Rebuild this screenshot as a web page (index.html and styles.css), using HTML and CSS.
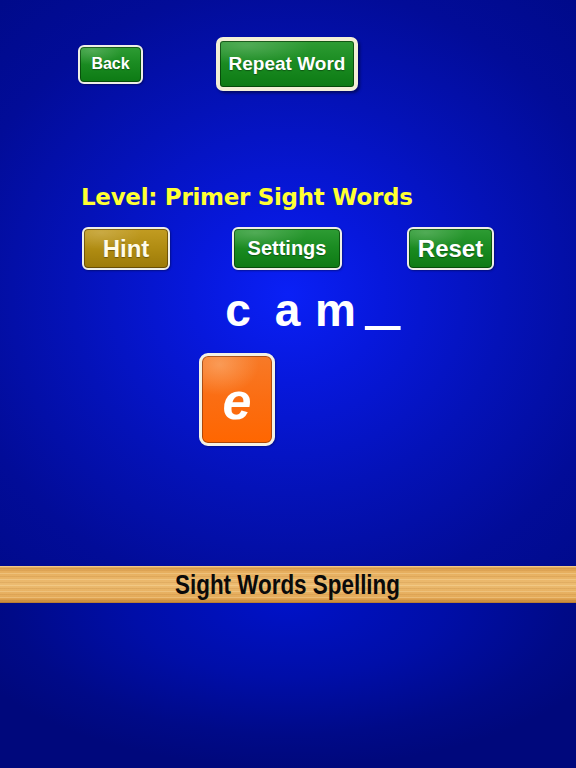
FILE: index.html
```html
<!DOCTYPE html>
<html lang="en">
<head>
    <meta charset="UTF-8">
    <meta name="viewport" content="width=device-width, initial-scale=1.0">
    <title>Sight Words Spelling</title>
    <link rel="stylesheet" href="styles.css">
</head>

<body>
    <div class="stage">
        <div class="top-row">
            <button class="btn btn-back">Back</button>
            <button class="btn btn-repeat">Repeat Word</button>
        </div>

        <h1 class="level">Level: Primer Sight Words</h1>

        <div class="controls">
            <button class="btn btn-gold btn-hint">Hint</button>
            <button class="btn btn-settings">Settings</button>
            <button class="btn btn-reset">Reset</button>
        </div>

        <div class="word">
            <span class="letter l1">c</span>
            <span class="letter l2">a</span>
            <span class="letter l3">m</span>
            <span class="letter l4"><span class="blank">_</span></span>
        </div>

        <div class="tiles">
            <div class="tile"><span>e</span></div>
        </div>
    </div>

    <div class="banner"><span class="banner-title">Sight Words Spelling</span></div>

    <div class="footer"></div>
</body>
</html>
```

FILE: styles.css
```css
body {
    margin: 0;
    width: 576px;
    height: 768px;
    overflow: hidden;
    background: #000a88;
    font-family: 'Liberation Sans', Arial, sans-serif;
}

.stage {
    height: 566px;
    box-sizing: border-box;
    overflow: hidden;
    background: radial-gradient(ellipse 75% 70% at 50% 52%, #0a20f6 0%, #0718dc 22%, #0412b8 50%, #020c98 78%, #000a8a 100%);
}

.top-row {
    display: flex;
    align-items: center;
    padding: 37px 0 0 78px;
    gap: 73px;
}

.btn {
    font-family: 'Liberation Sans', Arial, sans-serif;
    font-weight: bold;
    color: #fff;
    border: 2px solid #eeeee6;
    border-radius: 6px;
    padding: 0;
    box-sizing: border-box;
    text-shadow: 0 1px 1px rgba(0, 0, 0, 0.35);
    background:
        radial-gradient(ellipse 70% 60% at 20% 10%, rgba(255, 255, 255, 0.18), rgba(255, 255, 255, 0) 70%),
        linear-gradient(180deg, #2e9c34 0%, #1b8c22 45%, #0d7a14 100%);
    box-shadow: inset 0 0 0 1px rgba(0, 40, 0, 0.55), 1px 1px 2px rgba(0, 0, 0, 0.35);
    cursor: pointer;
}

.btn-back {
    width: 65px;
    height: 39px;
    font-size: 16px;
}

.btn-repeat {
    width: 142px;
    height: 54px;
    font-size: 19px;
    border: 4px solid #f3efd6;
    border-radius: 7px;
    box-shadow: inset 0 0 0 1px rgba(0, 40, 0, 0.6), 2px 2px 3px rgba(0, 0, 0, 0.45);
}

.level {
    margin: 91px 0 0 81px;
    font-family: 'DejaVu Sans', sans-serif;
    font-weight: bold;
    font-size: 23px;
    line-height: 30px;
    color: #ffff33;
    letter-spacing: -0.3px;
}

.controls {
    display: flex;
    margin: 15px 0 0 82px;
}

.controls .btn {
    height: 43px;
}

.btn-hint {
    width: 88px;
    font-size: 24px;
}

.btn-gold {
    color: #fffbe8;
    background:
        radial-gradient(ellipse 70% 60% at 20% 10%, rgba(255, 255, 255, 0.16), rgba(255, 255, 255, 0) 70%),
        linear-gradient(180deg, #c29c22 0%, #b08c12 50%, #9c7a08 100%);
    box-shadow: inset 0 0 0 1px rgba(60, 40, 0, 0.55), 1px 1px 2px rgba(0, 0, 0, 0.35);
}

.btn-settings {
    width: 110px;
    font-size: 20px;
    margin-left: 62px;
}

.btn-reset {
    width: 87px;
    font-size: 24px;
    margin-left: 65px;
}

.word {
    display: flex;
    margin: 12px 0 0 213px;
    font-weight: bold;
    font-size: 46px;
    line-height: 56px;
    color: #fff;
}

.letter {
    text-align: center;
}

.l1 { width: 50px; }
.l2 { width: 49px; }
.l3 { width: 47px; }
.l4 { width: 48px; }

.blank {
    display: inline-block;
    transform-origin: 50% 50px;
    transform: translateY(-1px) scale(1.35, 2.2);
}

.tiles {
    display: flex;
    margin: 15px 0 0 199px;
}

.tile {
    width: 76px;
    height: 93px;
    box-sizing: border-box;
    border: 3px solid #f4f1e4;
    border-radius: 9px;
    background:
        radial-gradient(ellipse 80% 50% at 25% 10%, rgba(255, 220, 180, 0.35), rgba(255, 200, 150, 0) 70%),
        linear-gradient(180deg, #f77a28 0%, #fb6d12 50%, #ff6600 100%);
    box-shadow: inset 0 0 0 1px rgba(120, 50, 10, 0.6), 1px 1px 2px rgba(0, 0, 0, 0.3);
    display: flex;
    align-items: center;
    justify-content: center;
}

.tile span {
    color: #fff;
    font-weight: bold;
    font-style: italic;
    font-size: 52px;
    line-height: 1;
    margin-top: 2px;
}

.banner {
    height: 37px;
    box-sizing: border-box;
    text-align: center;
    border-top: 1px solid #f4c884;
    border-bottom: 1px solid #b87c34;
    background:
        repeating-linear-gradient(180deg, rgba(255, 236, 190, 0.28) 0 1px, rgba(255, 255, 255, 0) 1px 3px, rgba(170, 110, 40, 0.16) 3px 4px, rgba(255, 255, 255, 0) 4px 6px),
        linear-gradient(180deg, #cf8f3e 0%, #e6ad5c 10%, #ecbb70 50%, #e4aa58 88%, #cc8c3c 100%);
}

.banner-title {
    display: inline-block;
    font-weight: bold;
    font-size: 27px;
    line-height: 36px;
    color: #0a0a0a;
    transform: scaleX(0.83);
}

.footer {
    height: 165px;
    background: radial-gradient(ellipse 60% 100% at 50% 0%, #0012c8 0%, #000ea8 45%, #000a88 80%, #00087c 100%);
}
```
